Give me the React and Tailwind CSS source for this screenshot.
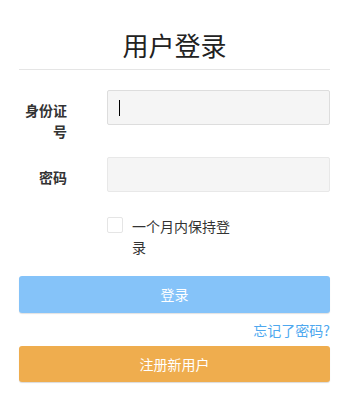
import React from "react";

const font = { fontFamily: '"Noto Sans CJK SC", "Noto Sans", sans-serif' };

const App = () => {
  return (
    <div className="bg-white min-h-[398px] pl-[19px] pr-[17px] pt-[28px] text-[#333]" style={font}>
      <h1 className="text-[26px] leading-[34px] text-center text-[#222] pb-[7px] border-b border-[#e5e5e5]">用户登录</h1>

      <div className="mt-[20px] flex">
        <label className="w-[48px] text-right text-[14px] leading-[21px] font-bold pt-[10px]">身份证号</label>
        <div className="relative ml-[40px] flex-1">
          <input
            type="text"
            className="w-full h-[35px] bg-[#f5f5f5] border border-[#dddddd] rounded-[2px] px-[12px] outline-none text-[14px]"
          />
          <span className="absolute left-[12px] top-[10px] w-[1px] h-[16px] bg-black" />
        </div>
      </div>

      <div className="mt-[15px] flex">
        <label className="w-[48px] text-right text-[14px] leading-[21px] font-bold pt-[10px]">密码</label>
        <input
          type="password"
          className="ml-[40px] flex-1 h-[35px] bg-[#f5f5f5] border border-[#e8e8e8] rounded-[2px] px-[12px] outline-none text-[14px]"
        />
      </div>

      <div className="mt-[25px] flex items-start pl-[88px]">
        <span className="w-[16px] h-[16px] border border-[#e5e5e5] rounded-[2px] bg-white shrink-0" />
        <span className="ml-[9px] w-[104px] text-[14px] leading-[21px] -mt-[1px]">一个月内保持登录</span>
      </div>

      <button className="mt-[18px] w-full h-[37px] bg-[#85c3f9] text-white text-[14px] rounded-[3px] shadow-[0_1px_1px_rgba(0,0,0,0.12)]">
        登录
      </button>

      <div className="text-right mt-[5px] leading-[22px]">
        <a className="text-[14px] text-[#4ea8ef]">忘记了密码?</a>
      </div>

      <button className="mt-[5px] w-full h-[36px] bg-[#efad4e] text-white text-[14px] rounded-[3px] shadow-[0_1px_1px_rgba(0,0,0,0.15)]">
        注册新用户
      </button>
    </div>
  );
};

export default App;
